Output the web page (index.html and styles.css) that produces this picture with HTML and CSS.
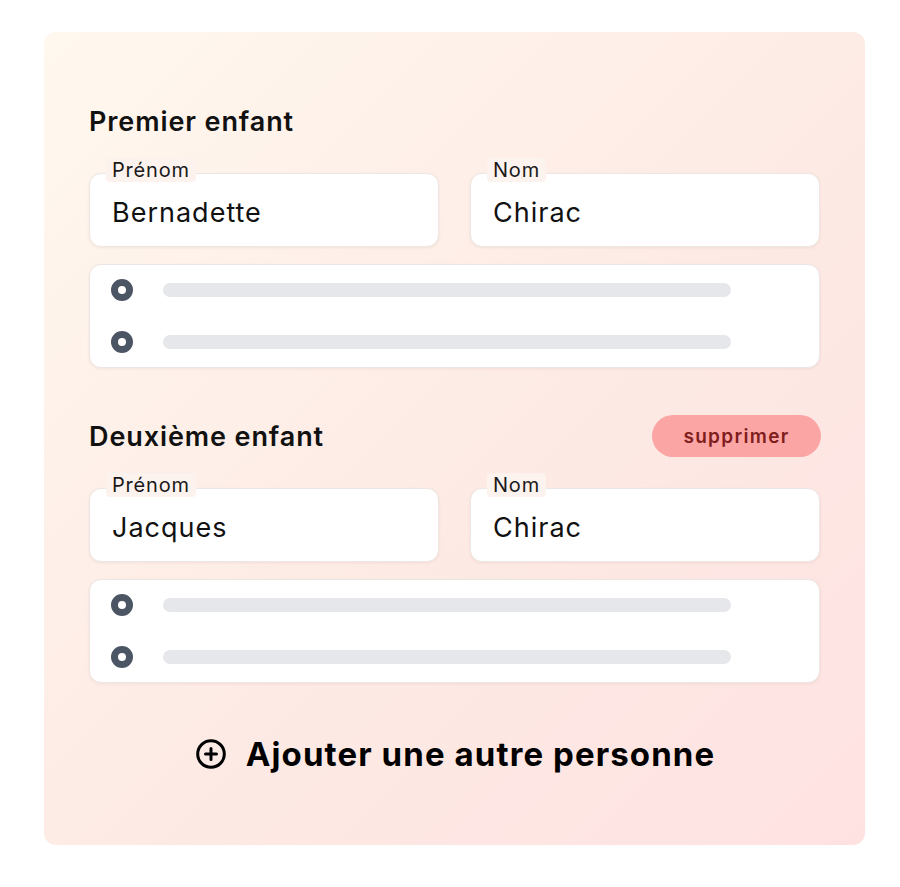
FILE: index.html
```html
<!DOCTYPE html>
<html lang="fr">
<head>
<meta charset="utf-8">
<title>Enfants</title>
<link rel="stylesheet" href="styles.css">
</head>
<body>
<div class="card">
  <section class="child">
    <div class="child-head">
      <h2>Premier enfant</h2>
    </div>
    <div class="fields">
      <div class="field"><span class="label">Prénom</span><span class="value">Bernadette</span></div>
      <div class="field"><span class="label">Nom</span><span class="value">Chirac</span></div>
    </div>
    <div class="options">
      <div class="option"><span class="radio"></span><span class="bar"></span></div>
      <div class="option"><span class="radio"></span><span class="bar"></span></div>
    </div>
  </section>
  <section class="child">
    <div class="child-head">
      <h2>Deuxième enfant</h2>
      <button class="remove">supprimer</button>
    </div>
    <div class="fields">
      <div class="field"><span class="label">Prénom</span><span class="value">Jacques</span></div>
      <div class="field"><span class="label">Nom</span><span class="value">Chirac</span></div>
    </div>
    <div class="options">
      <div class="option"><span class="radio"></span><span class="bar"></span></div>
      <div class="option"><span class="radio"></span><span class="bar"></span></div>
    </div>
  </section>
  <button class="add">
    <svg class="add-icon" viewBox="0 0 30 30" width="30" height="30" aria-hidden="true">
      <circle cx="15" cy="15" r="13.3" fill="none" stroke="#000" stroke-width="3"/>
      <path d="M15 9.5v11M9.5 15h11" stroke="#000" stroke-width="3" stroke-linecap="round"/>
    </svg>
    <span>Ajouter une autre personne</span>
  </button>
</div>
</body>
</html>
```

FILE: styles.css
```css
* { box-sizing: border-box; }
html, body { margin: 0; padding: 0; background: #ffffff; }
body {
  font-family: Inter, "Noto Sans", "Liberation Sans", sans-serif;
  color: #111111;
  padding: 32px 35px 42px 44px;
}
.card {
  width: 821px;
  height: 813px;
  border-radius: 12px;
  background: linear-gradient(135deg, #fff8ee 0%, #fdeae4 55%, #fee2e2 100%);
  padding: 68px 45px 0 45px;
  display: flex;
  flex-direction: column;
}
.child { display: flex; flex-direction: column; }
.child + .child { margin-top: 47px; }
.child-head {
  height: 42px;
  display: flex;
  align-items: center;
  justify-content: space-between;
}
.child-head h2 {
  margin: 0;
  font-size: 27px;
  font-weight: 600;
  letter-spacing: 0.9px;
}
.remove {
  width: 169px;
  height: 42px;
  border: none;
  border-radius: 21px;
  background: #fca5a5;
  color: #7f1d1d;
  font-family: inherit;
  font-size: 19px;
  font-weight: 600;
  letter-spacing: 1.3px;
  padding: 0;
  margin-right: -1px;
}
.fields {
  margin-top: 31px;
  display: grid;
  grid-template-columns: 350px 350px;
  column-gap: 31px;
}
.field {
  position: relative;
  height: 74px;
  background: #ffffff;
  border: 1px solid #ece6e4;
  border-radius: 12px;
  box-shadow: 0 1px 3px rgba(120, 60, 40, 0.08);
  display: flex;
  align-items: center;
  padding: 4px 22px 0 22px;
}
.label {
  position: absolute;
  top: -16px;
  left: 16px;
  padding: 0 6px;
  font-size: 20px;
  line-height: 24px;
  letter-spacing: 0.8px;
  color: #1a1a1a;
  background: #fdf3ee;
  border-radius: 4px;
}
.value {
  font-size: 27px;
  letter-spacing: 1px;
  color: #111111;
}
.options {
  margin-top: 17px;
  background: #ffffff;
  border: 1px solid #ece6e4;
  border-radius: 12px;
  box-shadow: 0 1px 3px rgba(120, 60, 40, 0.08);
  padding: 14px 0 14px 21px;
  display: flex;
  flex-direction: column;
  gap: 30px;
}
.option {
  height: 22px;
  display: flex;
  align-items: center;
}
.radio {
  width: 22px;
  height: 22px;
  border-radius: 50%;
  border: 7px solid #4b5563;
  background: #ffffff;
  flex: none;
}
.bar {
  margin-left: 30px;
  width: 568px;
  height: 14px;
  border-radius: 7px;
  background: #e5e7eb;
}
.add {
  margin-top: 51px;
  align-self: center;
  display: flex;
  align-items: center;
  gap: 20px;
  border: none;
  background: transparent;
  padding: 0;
  height: 40px;
  font-family: inherit;
  font-size: 33px;
  font-weight: 700;
  color: #000000;
  letter-spacing: 1.1px;
  margin-left: 2px;
}
.add-icon { display: block; flex: none; }
```
